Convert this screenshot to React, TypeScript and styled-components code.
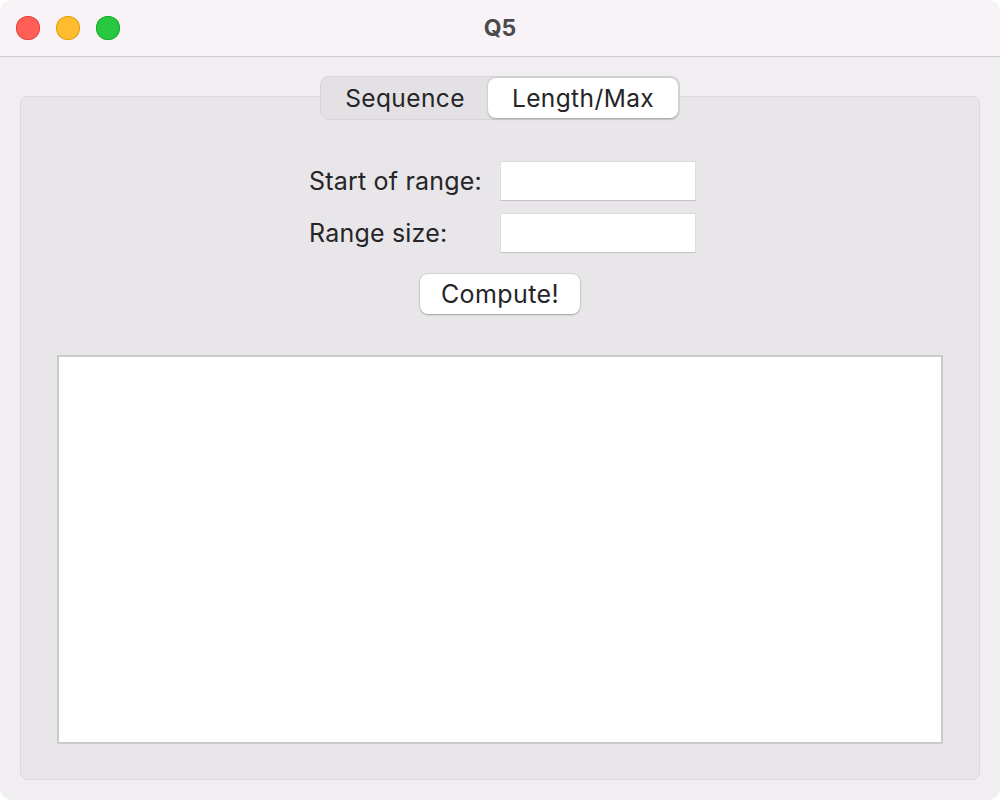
import React from "react";
import styled, { createGlobalStyle } from "styled-components";

const Global = createGlobalStyle`
  html, body { margin: 0; padding: 0; background: #ffffff; }
  body { font-family: Inter, "Noto Sans", "Liberation Sans", sans-serif; }
  * { box-sizing: border-box; }
`;

const Window = styled.div`
  width: 1000px;
  height: 800px;
  border-radius: 12px;
  overflow: hidden;
  background: #f0eef1;
  display: flex;
  flex-direction: column;
`;

const TitleBar = styled.div`
  height: 57px;
  flex: none;
  background: #f7f3f7;
  border-bottom: 1px solid #cfcdd0;
  display: flex;
  align-items: center;
  padding-left: 16px;
  position: relative;
`;

const Lights = styled.div`
  display: flex;
  gap: 16px;
`;

const Light = styled.span<{ $c: string; $b: string }>`
  width: 24px;
  height: 24px;
  border-radius: 50%;
  background: ${(p) => p.$c};
  box-shadow: inset 0 0 0 1px ${(p) => p.$b};
`;

const Title = styled.div`
  position: absolute;
  left: 0;
  right: 0;
  top: 0;
  bottom: 0;
  display: flex;
  align-items: center;
  justify-content: center;
  font-size: 23px;
  font-weight: 700;
  color: #4b4a4c;
  pointer-events: none;
`;

const Body = styled.div`
  flex: 1;
  padding: 19px 20px 20px;
  display: flex;
  flex-direction: column;
  align-items: center;
`;

const Tabs = styled.div`
  display: flex;
  height: 44px;
  width: 360px;
  padding: 1px;
  border-radius: 9px;
  background: #e3e1e4;
  border: 1px solid #d6d4d7;
  position: relative;
  z-index: 1;
  margin-bottom: -24px;
`;

const Tab = styled.div<{ $active?: boolean }>`
  flex: ${(p) => (p.$active ? "0 0 190px" : "1")};
  display: flex;
  align-items: center;
  justify-content: center;
  font-size: 24.5px;
  color: #262527;
  border-radius: 8px;
  background: ${(p) => (p.$active ? "#ffffff" : "transparent")};
  box-shadow: ${(p) => (p.$active ? "0 0.5px 2px rgba(0,0,0,0.3)" : "none")};
  letter-spacing: 0.4px;
`;

const Group = styled.div`
  align-self: stretch;
  flex: 1;
  background: #e8e6e9;
  border: 1px solid #dcdadd;
  border-radius: 7px;
  padding: 64px 36px 35px;
  display: flex;
  flex-direction: column;
  align-items: center;
`;

const Form = styled.div`
  display: grid;
  grid-template-columns: 191px 196px;
  row-gap: 12px;
  margin-left: 5px;
`;

const Label = styled.label`
  font-size: 25px;
  color: #262527;
  display: flex;
  align-items: center;
  letter-spacing: 0.2px;
`;

const Input = styled.div`
  height: 40px;
  background: #ffffff;
  border-top: 1px solid #dcdadd;
  border-bottom: 1.5px solid #c4c2c5;
  border-left: 1px solid #e0dee1;
  border-right: 1px solid #e0dee1;
`;

const Button = styled.button`
  margin-top: 21px;
  width: 160px;
  height: 40px;
  border: none;
  border-radius: 8px;
  background: #ffffff;
  box-shadow: 0 0 0 0.5px rgba(0,0,0,0.15), 0 1px 2px rgba(0,0,0,0.25);
  font-family: inherit;
  font-size: 25px;
  color: #262527;
  letter-spacing: 0.4px;
`;

const Output = styled.div`
  margin-top: 41px;
  align-self: stretch;
  flex: 1;
  background: #ffffff;
  border: 2px solid #cacaca;
`;

export default function App() {
  return (
    <>
      <Global />
      <Window>
        <TitleBar>
          <Lights>
            <Light $c="#ff5f57" $b="#e2463f" />
            <Light $c="#febc2e" $b="#e1a116" />
            <Light $c="#28c840" $b="#1aab29" />
          </Lights>
          <Title>Q5</Title>
        </TitleBar>
        <Body>
          <Tabs>
            <Tab>Sequence</Tab>
            <Tab $active>Length/Max</Tab>
          </Tabs>
          <Group>
            <Form>
              <Label>Start of range:</Label>
              <Input />
              <Label>Range size:</Label>
              <Input />
            </Form>
            <Button>Compute!</Button>
            <Output />
          </Group>
        </Body>
      </Window>
    </>
  );
}
